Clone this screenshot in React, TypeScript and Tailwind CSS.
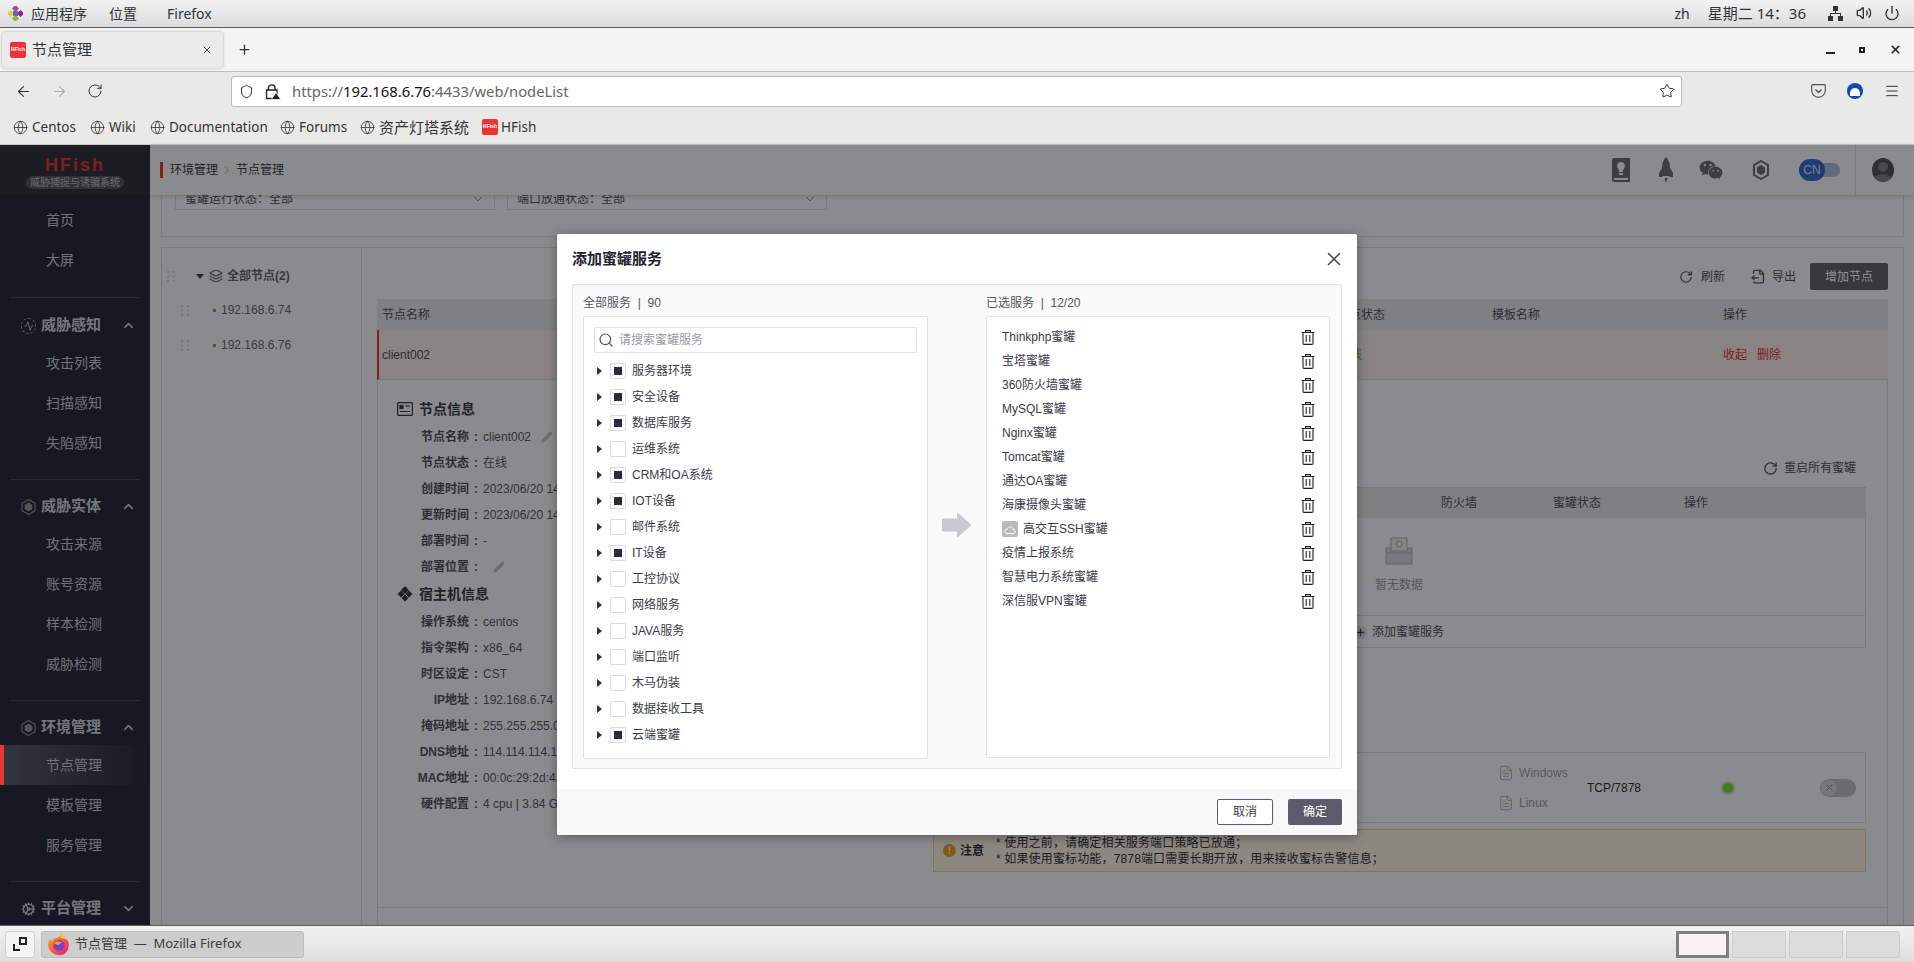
import React from 'react';
import {
  ArrowLeft, ArrowRight, ChevronDown, ChevronRight, ChevronUp, FileOutput, FileText, Globe, Layers, Menu,
  Pencil, Plus, Power, RotateCw, Search, Shield, Star, Volume2, X, Cog, Activity,
} from 'lucide-react';
import { FaWeixin } from 'react-icons/fa';

const chromeFont = "[font-family:'Noto_Sans','Noto_Sans_CJK_SC',sans-serif]";

const treeItems = [
  ['服务器环境', true], ['安全设备', true], ['数据库服务', true], ['运维系统', false], ['CRM和OA系统', true],
  ['IOT设备', true], ['邮件系统', false], ['IT设备', true], ['工控协议', false], ['网络服务', false],
  ['JAVA服务', false], ['端口监听', false], ['木马伪装', false], ['数据接收工具', false], ['云端蜜罐', true],
] as [string, boolean][];

const picked = [
  'Thinkphp蜜罐', '宝塔蜜罐', '360防火墙蜜罐', 'MySQL蜜罐', 'Nginx蜜罐', 'Tomcat蜜罐', '通达OA蜜罐',
  '海康摄像头蜜罐', '高交互SSH蜜罐', '疫情上报系统', '智慧电力系统蜜罐', '深信服VPN蜜罐',
];

const nodeInfo = [
  ['节点名称', 'client002'], ['节点状态', '在线'], ['创建时间', '2023/06/20 14:20:11'],
  ['更新时间', '2023/06/20 14:36:02'], ['部署时间', '-'], ['部署位置', ''],
];
const hostInfo = [
  ['操作系统', 'centos'], ['指令架构', 'x86_64'], ['时区设定', 'CST'], ['IP地址', '192.168.6.74'],
  ['掩码地址', '255.255.255.0'], ['DNS地址', '114.114.114.114'], ['MAC地址', '00:0c:29:2d:4a:10'],
  ['硬件配置', '4 cpu | 3.84 GB'],
];

function Trash() {
  return (
    <svg width="14" height="15" viewBox="0 0 14 15" fill="none" stroke="#1f1f28" strokeWidth="1.1">
      <path d="M0.5 2.5H13.5M4.5 2.5V0.6H9.5V2.5M2 2.5V13.2C2 13.9 2.4 14.4 3 14.4H11C11.6 14.4 12 13.9 12 13.2V2.5M5.2 5V11.8M8.8 5V11.8" />
    </svg>
  );
}

function HexIcon() {
  return (
    <svg width="16" height="18" viewBox="0 0 16 18" fill="none" stroke="#9c9da6" strokeWidth="1.1">
      <path d="M8 1L15 5V13L8 17L1 13V5Z" />
      <path d="M8 5L11.5 7V11L8 13L4.5 11V7Z" fill="#9c9da6" />
    </svg>
  );
}

function Dots() {
  return (
    <svg width="8" height="11" viewBox="0 0 8 11" fill="#dcdde0">
      <rect x="0" y="0" width="2" height="2" /><rect x="6" y="0" width="2" height="2" />
      <rect x="0" y="4.5" width="2" height="2" /><rect x="6" y="4.5" width="2" height="2" />
      <rect x="0" y="9" width="2" height="2" /><rect x="6" y="9" width="2" height="2" />
    </svg>
  );
}

function Favicon() {
  return (
    <span className="flex h-4 w-4 shrink-0 items-center justify-center rounded-[2px] bg-[#ee3338] text-[5px] font-bold text-white [font-family:'Liberation_Sans',sans-serif]">
      HFish
    </span>
  );
}

function FirefoxLogo() {
  return (
    <svg width="24" height="24" viewBox="0 0 24 24">
      <defs>
        <linearGradient id="ffg" x1="0" y1="0" x2="1" y2="1">
          <stop offset="0" stopColor="#ffb429" />
          <stop offset="0.5" stopColor="#ff5a36" />
          <stop offset="1" stopColor="#e31587" />
        </linearGradient>
      </defs>
      <path d="M14 1C15 4 19 5 21 9C23 14 21 21 15 23C8 24 2 20 1 13C1 10 2 8 3 7C3 8 4 9 5 9C6 7 8 6 10 6C12 5 14 4 14 1Z" fill="url(#ffg)" />
      <path d="M14 1C15 4 19 5 21 9C19 7 16 6 14 6C13 5 13 3 14 1Z" fill="#ffd02b" />
      <circle cx="12" cy="13.5" r="5.5" fill="#7b3fc4" />
      <path d="M7 11C9 9 13 9 15 11C13 11 12 12 12 13C10 13 8 12 7 11Z" fill="#ff9a2e" />
    </svg>
  );
}

function TopBar() {
  return (
    <div className={`flex h-7 shrink-0 items-center justify-between border-b border-[#5c5c5c] bg-gradient-to-b from-[#f2f2f2] to-[#dcdcdc] pb-[1px] text-[14px] text-[#2e3436] ${chromeFont}`}>
      <div className="flex items-center pl-[8px]">
        <svg width="15" height="15" viewBox="0 0 15 15" className="mr-[8px]">
          <rect x="5" y="0" width="5" height="5" fill="#9c4f96" transform="rotate(45 7.5 2.5)" />
          <rect x="0" y="5" width="5" height="5" fill="#ecc94b" transform="rotate(45 2.5 7.5)" />
          <rect x="10" y="5" width="5" height="5" fill="#932279" transform="rotate(45 12.5 7.5)" />
          <rect x="5" y="10" width="5" height="5" fill="#8fb63a" transform="rotate(45 7.5 12.5)" />
          <rect x="5" y="5" width="5" height="5" fill="#5a6fb0" />
        </svg>
        <span className="mr-[22px]">应用程序</span>
        <span className="mr-[30px]">位置</span>
        <span>Firefox</span>
      </div>
      <div className="flex items-center pr-[14px]">
        <span className="mr-[18px]">zh</span>
        <span className="mr-[22px] text-[15px]">星期二 14：36</span>
        <svg width="15" height="15" viewBox="0 0 15 15" fill="#2e3436" className="mr-[13px]">
          <rect x="5" y="0" width="5" height="5" /><rect x="0" y="10" width="5" height="5" /><rect x="10" y="10" width="5" height="5" />
          <path d="M7 5H8V7H13V10H12V8H3V10H2V7H7Z" />
        </svg>
        <Volume2 size={16} className="mr-[12px]" />
        <Power size={16} />
      </div>
    </div>
  );
}

function TabStrip() {
  return (
    <div className={`flex h-[44px] shrink-0 items-center border-b border-[#bcbcbc] bg-[#f4f4f4] pl-[2px] text-[15px] text-[#2e3436] ${chromeFont}`}>
      <div className="flex h-[36px] w-[221px] items-center rounded-[3px] bg-[#ebebeb] pl-[8px] pr-[10px] shadow-[0_0_3px_rgba(0,0,0,0.3)]">
        <Favicon />
        <span className="ml-[6px] flex-1">节点管理</span>
        <X size={12} className="text-[#444]" />
      </div>
      <Plus size={15} className="ml-[14px] text-[#333]" />
      <div className="ml-auto flex items-center gap-[24px] pr-[12px] text-[#222]">
        <span className="mt-[7px] h-[2px] w-[9px] bg-[#222]" />
        <span className="h-[6px] w-[6px] border-2 border-[#222]" />
        <X size={13} strokeWidth={3} />
      </div>
    </div>
  );
}

function UrlBar() {
  return (
    <div className={`flex h-[36px] shrink-0 items-center bg-[#e9e9e8] pl-[15px] pr-[14px] pt-[2px] text-[#2e3436] ${chromeFont}`}>
      <ArrowLeft size={17} strokeWidth={1.5} />
      <ArrowRight size={17} strokeWidth={1.5} className="ml-[19px] text-[#aaa]" />
      <RotateCw size={16} strokeWidth={1.5} className="ml-[19px]" />
      <div className="ml-[128px] flex h-[31px] w-[1451px] items-center rounded-[3px] border border-[#bcbcb8] bg-white pl-[7px] pr-[6px] text-[14.8px]">
        <Shield size={15} strokeWidth={1.6} />
        <svg width="16" height="17" viewBox="0 0 16 17" fill="none" stroke="#222" strokeWidth="1.3" className="ml-[11px]">
          <path d="M3.500 7V4.500C3.500 1 10 1 10 4.500V7M1.500 7H12V15.500H1.500Z" />
          <path d="M11 9.500L15.800 16.500H6.200Z" fill="#222" stroke="#fff" strokeWidth="0.8" />
        </svg>
        <span className="ml-[11px] text-[#666]">
          https://<span className="text-[#111]">192.168.6.76</span>:4433/web/nodeList
        </span>
        <Star size={16} strokeWidth={1.5} className="ml-auto" />
      </div>
      <svg width="15" height="14" viewBox="0 0 15 14" fill="none" stroke="#555" strokeWidth="1.2" className="ml-[129px]">
        <path d="M1.500 0.700H13.500C14 0.700 14.300 1 14.300 1.500V6.500C14.300 10.500 11 13.300 7.500 13.300C4 13.300 0.700 10.500 0.700 6.500V1.500C0.700 1 1 0.700 1.500 0.700Z" />
        <path d="M4.500 5.500L7.500 8.500L10.500 5.500" strokeWidth="1.500" />
      </svg>
      <span className="ml-[21px] flex h-[16px] w-[16px] items-end justify-center rounded-full bg-[#0b4bb3] pb-[3px]">
        <span className="h-[8px] w-[10px] rounded-t-full bg-white" />
      </span>
      <Menu size={16} strokeWidth={1.5} className="ml-[21px]" />
    </div>
  );
}

function Bookmarks() {
  const marks = [
    ['Centos', 'w-[77px] text-[13.5px]'], ['Wiki', 'w-[60px] text-[13.5px]'], ['Documentation', 'w-[130px] text-[13.5px]'],
    ['Forums', 'w-[80px] text-[13.5px]'], ['资产灯塔系统', 'w-[122px] text-[15px]'],
  ];
  return (
    <div className={`flex h-[37px] shrink-0 items-center border-b border-[#c8c8c8] bg-[#e9e9e8] pl-[13px] pt-[2px] text-[13.5px] text-[#333] ${chromeFont}`}>
      {marks.map(([name, w]) => (
        <div key={name} className={`flex items-center gap-[4px] ${w}`}>
          <Globe size={15} strokeWidth={1.3} />
          <span>{name}</span>
        </div>
      ))}
      <Favicon />
      <span className="ml-[3px]">HFish</span>
    </div>
  );
}

function SideItem({ label, active }: { label: string; active?: boolean }) {
  return (
    <div className={`relative flex h-10 items-center pl-[46px] text-[14px] text-[#cdcfda] ${active ? 'bg-gradient-to-r from-[#5f6173] to-[#2a2c41]' : ''}`}>
      {active && <span className="absolute left-0 top-0 z-20 h-full w-1 bg-[#e83535]" />}
      {label}
    </div>
  );
}

function SideGroup({ icon, title, items, active, open = true }: { icon: React.ReactNode; title: string; items: string[]; active?: string; open?: boolean }) {
  return (
    <div>
      <div className="flex h-[35px] items-center pl-[21px] pr-[14px] text-[15px] font-bold text-[#d6d7e0]">
        <span className="mr-[5px] flex w-[15px] justify-center">{icon}</span>
        <span className="flex-1">{title}</span>
        {open ? <ChevronUp size={15} strokeWidth={2.4} /> : <ChevronDown size={15} strokeWidth={2.4} />}
      </div>
      {open && (
        <>
          {items.map((i) => <SideItem key={i} label={i} active={i === active} />)}
          <div className="mx-[10px] mb-[9px] mt-[16px] h-px bg-[#4a4c60]" />
        </>
      )}
    </div>
  );
}

function Sidebar() {
  return (
    <aside className="flex w-[150px] shrink-0 flex-col overflow-hidden bg-[#2a2c41]">
      <div className="flex h-[50px] shrink-0 flex-col items-center justify-center bg-[#33353e] pt-[3px]">
        <div className="text-[18px] font-bold leading-[20px] tracking-[2px] text-[#e8383d]">HFish</div>
        <div className="mt-[1px] rounded-full bg-[#5a5b63] px-[4px] text-[10px] leading-[13px] text-[#c0c1c6]">威胁捕捉与诱骗系统</div>
      </div>
      <div className="pt-[5px]">
        <SideItem label="首页" />
        <SideItem label="大屏" />
        <div className="mx-[10px] mb-[10px] mt-[17px] h-px bg-[#4a4c60]" />
        <SideGroup
          icon={<span className="flex h-[16px] w-[16px] items-center justify-center rounded-full border border-dashed border-[#9c9da6]"><Activity size={10} /></span>}
          title="威胁感知"
          items={['攻击列表', '扫描感知', '失陷感知']}
        />
        <SideGroup icon={<HexIcon />} title="威胁实体" items={['攻击来源', '账号资源', '样本检测', '威胁检测']} />
        <SideGroup icon={<HexIcon />} title="环境管理" items={['节点管理', '模板管理', '服务管理']} active="节点管理" />
        <SideGroup icon={<Cog size={16} />} title="平台管理" items={[]} open={false} />
      </div>
    </aside>
  );
}

function AppHeader() {
  return (
    <header className="relative z-[1] flex h-[50px] shrink-0 items-center bg-[#fcfdff] pl-[10px] text-[12px] text-[#3c3d45] shadow-[0_1px_4px_rgba(0,0,0,0.2)]">
      <span className="mr-[7px] h-[16px] w-[3px] bg-[#e83a3a]" />
      <span>环境管理</span>
      <ChevronRight size={12} className="mx-[3px] text-[#bbb]" />
      <span>节点管理</span>
      <div className="ml-auto flex h-full items-center text-[#70717c]">
        <svg width="18" height="24" viewBox="0 0 18 24" fill="#70717c" className="mr-[28px]">
          <path d="M2 0H18V24H2C1 24 0 23 0 22V2C0 1 1 0 2 0ZM2 20V22H16V20ZM9 4C6.500 4 5 6 5 8C5 10 7 11 7 13V14H11V13C11 11 13 10 13 8C13 6 11.500 4 9 4ZM7 15V17H11V15Z" fillRule="evenodd" />
        </svg>
        <svg width="16" height="26" viewBox="0 0 16 26" fill="#70717c" className="mr-[25px]">
          <path d="M8 0C11 3 12 7 12 11L15 16V20H12L11 19H5L4 20H1V16L4 11C4 7 5 3 8 0ZM6.500 21H9.500L8 26Z" />
        </svg>
        <FaWeixin size={24} className="mr-[30px]" />
        <svg width="16" height="20" viewBox="0 0 16 20" fill="none" stroke="#70717c" strokeWidth="2" className="mr-[30px]">
          <path d="M8 1L15 5V15L8 19L1 15V5Z" /><path d="M8 6L11 8V12L8 14L5 12V8Z" fill="#70717c" />
        </svg>
        <div className="relative mr-[15px] h-[14px] w-[41px] rounded-full bg-[#a9c1e9]">
          <span className="absolute -top-[4px] left-0 flex h-[22px] w-[26px] items-center justify-center rounded-full bg-[#3a6fd0] text-[12px] text-[#dbe6f8]">CN</span>
        </div>
        <div className="flex h-full w-[59px] items-center justify-center border-l border-[#dfe0e3] pr-[4px]">
          <svg width="22" height="24" viewBox="0 0 22 24">
            <ellipse cx="11" cy="12" rx="11" ry="12" fill="#555660" />
            <circle cx="11" cy="9" r="5" fill="#83848c" />
            <path d="M3 20C4 15 18 15 19 20C15 25 7 25 3 20Z" fill="#83848c" />
          </svg>
        </div>
      </div>
    </header>
  );
}

function InfoRow({ k, v, edit }: { k: string; v: string; edit?: boolean }) {
  return (
    <div className="flex h-[26px] items-center text-[12px]">
      <span className="w-[72px] shrink-0 text-right font-bold text-[#55565f]">{k}</span>
      <span className="mx-[5px] font-bold text-[#55565f]">:</span>
      <span className="whitespace-nowrap text-[#5b5c66]">{v}</span>
      {edit && <Pencil size={12} className="ml-[10px] text-[#c5c6cb]" fill="#c5c6cb" />}
    </div>
  );
}

function NodeDetail() {
  return (
    <div className="relative flex flex-1 border-x border-[#dfe0e3]">
      <div className="w-[555px] shrink-0 pl-[19px] pt-[17px]">
        <div className="mb-[3px] flex h-[24px] items-center gap-[6px] text-[14px] font-bold text-[#3c3d45]">
          <svg width="16" height="14" viewBox="0 0 16 14" fill="none" stroke="#3c3d45" strokeWidth="1.2">
            <rect x="0.6" y="0.6" width="14.800" height="12.800" rx="1" /><rect x="3" y="3.500" width="3" height="3" fill="#3c3d45" /><path d="M8 4H13M3 9.500H13" />
          </svg>
          节点信息
        </div>
        {nodeInfo.map(([k, v], i) => <InfoRow key={k} k={k} v={v} edit={i === 0 || i === 5} />)}
        <div className="mb-[3px] mt-[2px] flex h-[24px] items-center gap-[6px] text-[14px] font-bold text-[#3c3d45]">
          <svg width="16" height="16" viewBox="0 0 16 16" fill="#3c3d45">
            <path d="M8 0L12 4L8 8L4 4ZM4 4.500L7.500 8L4 11.500L0.500 8ZM12 4.500L15.500 8L12 11.500L8.500 8ZM8 8.500L11.500 12L8 15.500L4.500 12Z" />
          </svg>
          宿主机信息
        </div>
        {hostInfo.map(([k, v]) => <InfoRow key={k} k={k} v={v} />)}
      </div>
      <div className="flex w-[933px] shrink-0 flex-col text-[12px] text-[#55565f]">
        <div className="mt-[78px] flex h-[20px] items-center justify-end gap-[6px] pr-[10px]">
          <RotateCw size={15} /> 重启所有蜜罐
        </div>
        <div className="mt-[9px] h-[161px] border border-[#dfe0e3]">
          <div className="flex h-[30px] items-center bg-[#e8e9ec] text-[#55565f]">
            <span className="ml-[507px] w-[112px]">防火墙</span>
            <span className="w-[131px]">蜜罐状态</span>
            <span>操作</span>
          </div>
          <div className="ml-[435px] flex h-[97px] w-[60px] flex-col items-center justify-center gap-[11px] pb-[2px] text-[#9d9ea5]">
            <svg width="28" height="28" viewBox="0 0 28 28" fill="#dcdde0" stroke="#b5b6bb">
              <rect x="1" y="11" width="26" height="16" />
              <rect x="6" y="1" width="16" height="13" fill="#f2f2f4" /><circle cx="14" cy="7" r="3" fill="none" />
              <path d="M1 16H27" />
            </svg>
            暂无数据
          </div>
          <div className="flex h-[33px] items-center border-t border-[#dfe0e3] pl-[420px]">
            <span className="mr-[5px] flex h-[13px] w-[13px] items-center justify-center rounded-full bg-[#e4e5e8]"><Plus size={11} strokeWidth={3} /></span> 添加蜜罐服务
          </div>
        </div>
        <div className="mt-[104px] h-[71px] border border-[#dfe0e3]">
          <div className="flex h-full items-center">
            <div className="ml-[564px] flex w-[89px] flex-col gap-[12px] text-[#a3a4aa]">
              <span className="flex items-center gap-[5px]"><FileText size={16} strokeWidth={1.2} /> Windows</span>
              <span className="flex items-center gap-[5px]"><FileText size={16} strokeWidth={1.2} /> Linux</span>
            </div>
            <span className="text-[#33343b]">TCP/7878</span>
            <span className="ml-[82px] h-[10px] w-[10px] rounded-full bg-[#7be03a] ring-2 ring-[#cfe8bf]" />
            <span className="ml-[87px] flex h-[18px] w-[36px] items-center rounded-full bg-[#c3c4c9] pl-[1px]">
              <span className="flex h-[16px] w-[16px] items-center justify-center rounded-full bg-[#d9dadd] text-[#8d8e94]"><X size={11} /></span>
            </span>
          </div>
        </div>
        <div className="mt-[6px] flex h-[43px] items-center border border-[#efd3a5] bg-[#fdf8ec] pl-[9px] text-[#33343b]">
          <span className="mr-[4px] flex h-[13px] w-[13px] items-center justify-center rounded-full bg-[#f0a020] text-[10px] font-bold text-white">!</span>
          <span className="mr-[12px] font-bold">注意</span>
          <div className="leading-[16px] tracking-[0.15px]">
            <div>* 使用之前，请确定相关服务端口策略已放通；</div>
            <div>* 如果使用蜜标功能，7878端口需要长期开放，用来接收蜜标告警信息；</div>
          </div>
        </div>
      </div>
      <div className="absolute bottom-[17px] left-0 right-0 h-px bg-[#dfe0e3]" />
    </div>
  );
}

function PageBody() {
  return (
    <div className="flex min-h-0 flex-1 flex-col overflow-hidden bg-[#fcfdff] pl-[11px] pr-[10px]">
      <div className="-mt-[25px] flex h-[67px] shrink-0 items-end gap-[12px] border border-[#dfe0e3] pb-[26px] pl-[13px]">
        <div className="flex h-[22px] w-[320px] items-center justify-between border border-[#dfe0e3] px-[9px] text-[12px] text-[#55565f]">
          蜜罐运行状态：全部 <ChevronDown size={14} strokeWidth={1.2} />
        </div>
        <div className="flex h-[22px] w-[320px] items-center justify-between border border-[#dfe0e3] px-[9px] text-[12px] text-[#55565f]">
          端口放通状态：全部 <ChevronDown size={14} strokeWidth={1.2} />
        </div>
      </div>
      <div className="mt-[10px] flex min-h-0 flex-1 border border-b-0 border-[#dfe0e3]">
        <div className="w-[200px] shrink-0 border-r border-[#dfe0e3] pt-[16px] text-[12px] text-[#6a6b74]">
          <div className="flex h-[24px] items-center pl-[5px] font-bold">
            <Dots />
            <span className="ml-[21px] mr-[5px] h-0 w-0 border-x-[4px] border-t-[5px] border-x-transparent border-t-[#444]" />
            <Layers size={14} className="mr-[4px]" /> 全部节点(2)
          </div>
          <div className="mt-[10px] flex h-[24px] items-center pl-[19px]"><Dots /><span className="ml-[24px] mr-[5px] h-[3px] w-[3px] bg-[#999]" />192.168.6.74</div>
          <div className="mt-[11px] flex h-[24px] items-center pl-[19px]"><Dots /><span className="ml-[24px] mr-[5px] h-[3px] w-[3px] bg-[#999]" />192.168.6.76</div>
        </div>
        <div className="flex min-w-0 flex-1 flex-col pl-[15px] pr-[15px] pt-[15px]">
          <div className="flex h-[27px] shrink-0 items-center justify-end text-[12px] text-[#55565f]">
            <RotateCw size={14} className="mr-[8px]" /> 刷新
            <FileOutput size={15} className="ml-[26px] mr-[6px]" /> 导出
            <span className="ml-[14px] flex h-[27px] w-[78px] items-center justify-center rounded-[2px] bg-[#656671] text-white">增加节点</span>
          </div>
          <div className="mt-[9px] flex h-[31px] shrink-0 items-center bg-[#e8e9ec] pl-[5px] text-[12px] text-[#55565f]">
            <span className="w-[955px]">节点名称</span>
            <span className="w-[155px]">节点状态</span>
            <span className="w-[231px]">模板名称</span>
            <span>操作</span>
          </div>
          <div className="flex h-[50px] shrink-0 items-center border-b border-l-2 border-[#e7e0e0] border-l-[#e83a3a] bg-[#fbeeee] pl-[3px] text-[12px] text-[#55565f]">
            <span className="w-[956px]">client002</span>
            <span className="w-[385px] text-[#6fbf3a]">在线</span>
            <span className="mr-[10px] text-[#e83a3a]">收起</span>
            <span className="text-[#e83a3a]">删除</span>
          </div>
          <NodeDetail />
        </div>
      </div>
    </div>
  );
}

function Modal() {
  return (
    <div className="flex h-[601px] w-[800px] flex-col rounded-[2px] bg-white text-[12px] text-[#3a3b4a] shadow-[0_2px_12px_rgba(0,0,0,0.35)]">
      <div className="flex h-[50px] shrink-0 items-center justify-between pl-[15px] pr-[12px]">
        <span className="text-[15px] font-bold text-[#22232e]">添加蜜罐服务</span>
        <X size={22} strokeWidth={1.6} className="text-[#44454f]" />
      </div>
      <div className="mx-[15px] flex h-[485px] shrink-0 rounded-[2px] border border-[#e2e2e4] bg-[#fafafa] pb-[10px] pl-[10px] pr-[11px]">
        <div className="flex w-[345px] shrink-0 flex-col">
          <div className="flex h-[31px] shrink-0 items-center pt-[4px] text-[#55565f]">全部服务&nbsp;&nbsp;|&nbsp;&nbsp;90</div>
          <div className="flex-1 rounded-[2px] border border-[#e2e2e4] bg-white p-[10px]">
            <div className="flex h-[26px] items-center rounded-[2px] border border-[#e2e2e4] pl-[3px]">
              <Search size={16} strokeWidth={1.8} className="mr-[5px] text-[#55565f]" />
              <span className="text-[#9a9ba2]">请搜索蜜罐服务</span>
            </div>
            <div className="mt-[5px]">
              {treeItems.map(([name, checked]) => (
                <div key={name} className="flex h-[26px] items-center">
                  <span className="ml-[3px] mr-[8px] h-0 w-0 border-y-[4px] border-l-[5px] border-y-transparent border-l-[#333]" />
                  <span className="flex h-4 w-4 items-center justify-center rounded-[2px] border border-[#dcdcdf]">
                    {checked && <span className="h-2 w-2 bg-[#2a2b3d]" />}
                  </span>
                  <span className="ml-[6px]">{name}</span>
                </div>
              ))}
            </div>
          </div>
        </div>
        <div className="flex w-[58px] shrink-0 items-center justify-center pt-[6px]">
          <svg width="30" height="26" viewBox="0 0 30 26" fill="#c9cacd">
            <path d="M1 6.500H15V1.500C15 0.800 15.600 0.500 16.200 1L29.500 13L16.200 25C15.600 25.500 15 25.200 15 24.500V19.500H1C0.400 19.500 0 19.100 0 18.500V7.500C0 6.900 0.400 6.500 1 6.500Z" />
          </svg>
        </div>
        <div className="flex w-[344px] shrink-0 flex-col">
          <div className="flex h-[31px] shrink-0 items-center pt-[4px] text-[#55565f]">已选服务&nbsp;&nbsp;|&nbsp;&nbsp;12/20</div>
          <div className="flex-1 rounded-[2px] border border-[#e2e2e4] bg-white pb-[8px] pl-[15px] pr-[14px] pt-[8px]">
            {picked.map((name) => (
              <div key={name} className="flex h-6 items-center justify-between">
                <span className="flex items-center">
                  {name.startsWith('高交互') && (
                    <span className="mr-[5px] flex h-4 w-4 items-center justify-center rounded-[2px] bg-[#b9babd]">
                      <svg width="12" height="9" viewBox="0 0 12 9" fill="none" stroke="#fff" strokeWidth="1">
                        <path d="M3 8.500H9.500C12 8.500 12 5 9.500 5C9 1 4 0.500 3 4.500C0 4.500 0 8.500 3 8.500Z" />
                      </svg>
                    </span>
                  )}
                  {name}
                </span>
                <Trash />
              </div>
            ))}
          </div>
        </div>
      </div>
      <div className="mt-[20px] flex flex-1 items-center justify-end gap-[15px] rounded-b-[2px] bg-[#f8f8f8] pr-[15px]">
        <span className="flex h-[26px] w-[56px] items-center justify-center rounded-[2px] border border-[#5b5c68] bg-white text-[#3a3b4a]">取消</span>
        <span className="flex h-[26px] w-[54px] items-center justify-center rounded-[2px] bg-[#5b5b6b] text-white">确定</span>
      </div>
    </div>
  );
}

function TaskBar() {
  return (
    <div className={`flex h-[37px] shrink-0 items-center border-t border-[#5c5c5c] bg-gradient-to-b from-[#f2f2f2] to-[#dedede] pl-[5px] pr-[14px] text-[13px] text-[#3a3a3a] ${chromeFont}`}>
      <span className="flex h-[27px] w-[30px] items-center justify-center rounded-[3px] border border-[#cfcfcf] bg-[#f4f4f4]">
        <svg width="14" height="14" viewBox="0 0 14 14" fill="none" stroke="#222" strokeWidth="2">
          <rect x="7" y="1" width="6" height="6" /><path d="M1 7V13H7" />
        </svg>
      </span>
      <div className="ml-[6px] flex h-[27px] w-[263px] items-center rounded-[3px] border border-[#bdbdbd] bg-[#cdcdcd] pl-[5px]">
        <FirefoxLogo />
        <span className="ml-[4px]">节点管理 &nbsp;—&nbsp; Mozilla Firefox</span>
      </div>
      <div className="ml-auto flex h-[27px] gap-[3px]">
        <span className="w-[53px] border-[3px] border-[#7f7f7f] bg-[#f6f5f4]" />
        <span className="w-[54px] border border-[#cccccc] bg-[#dcdcdc]" />
        <span className="w-[54px] border border-[#cccccc] bg-[#dcdcdc]" />
        <span className="w-[54px] rounded-r-[3px] border border-[#cccccc] bg-[#dcdcdc]" />
      </div>
    </div>
  );
}

export default function App() {
  return (
    <div className="flex h-[962px] w-[1914px] flex-col overflow-hidden bg-white [font-family:'Liberation_Sans','Noto_Sans_CJK_SC',sans-serif]">
      <TopBar />
      <TabStrip />
      <UrlBar />
      <Bookmarks />
      <div className="relative flex min-h-0 flex-1">
        <Sidebar />
        <main className="flex min-w-0 flex-1 flex-col">
          <AppHeader />
          <PageBody />
        </main>
        <div className="absolute inset-0 z-10 flex justify-center bg-black/45 pt-[89px]">
          <div><Modal /></div>
        </div>
      </div>
      <TaskBar />
    </div>
  );
}
